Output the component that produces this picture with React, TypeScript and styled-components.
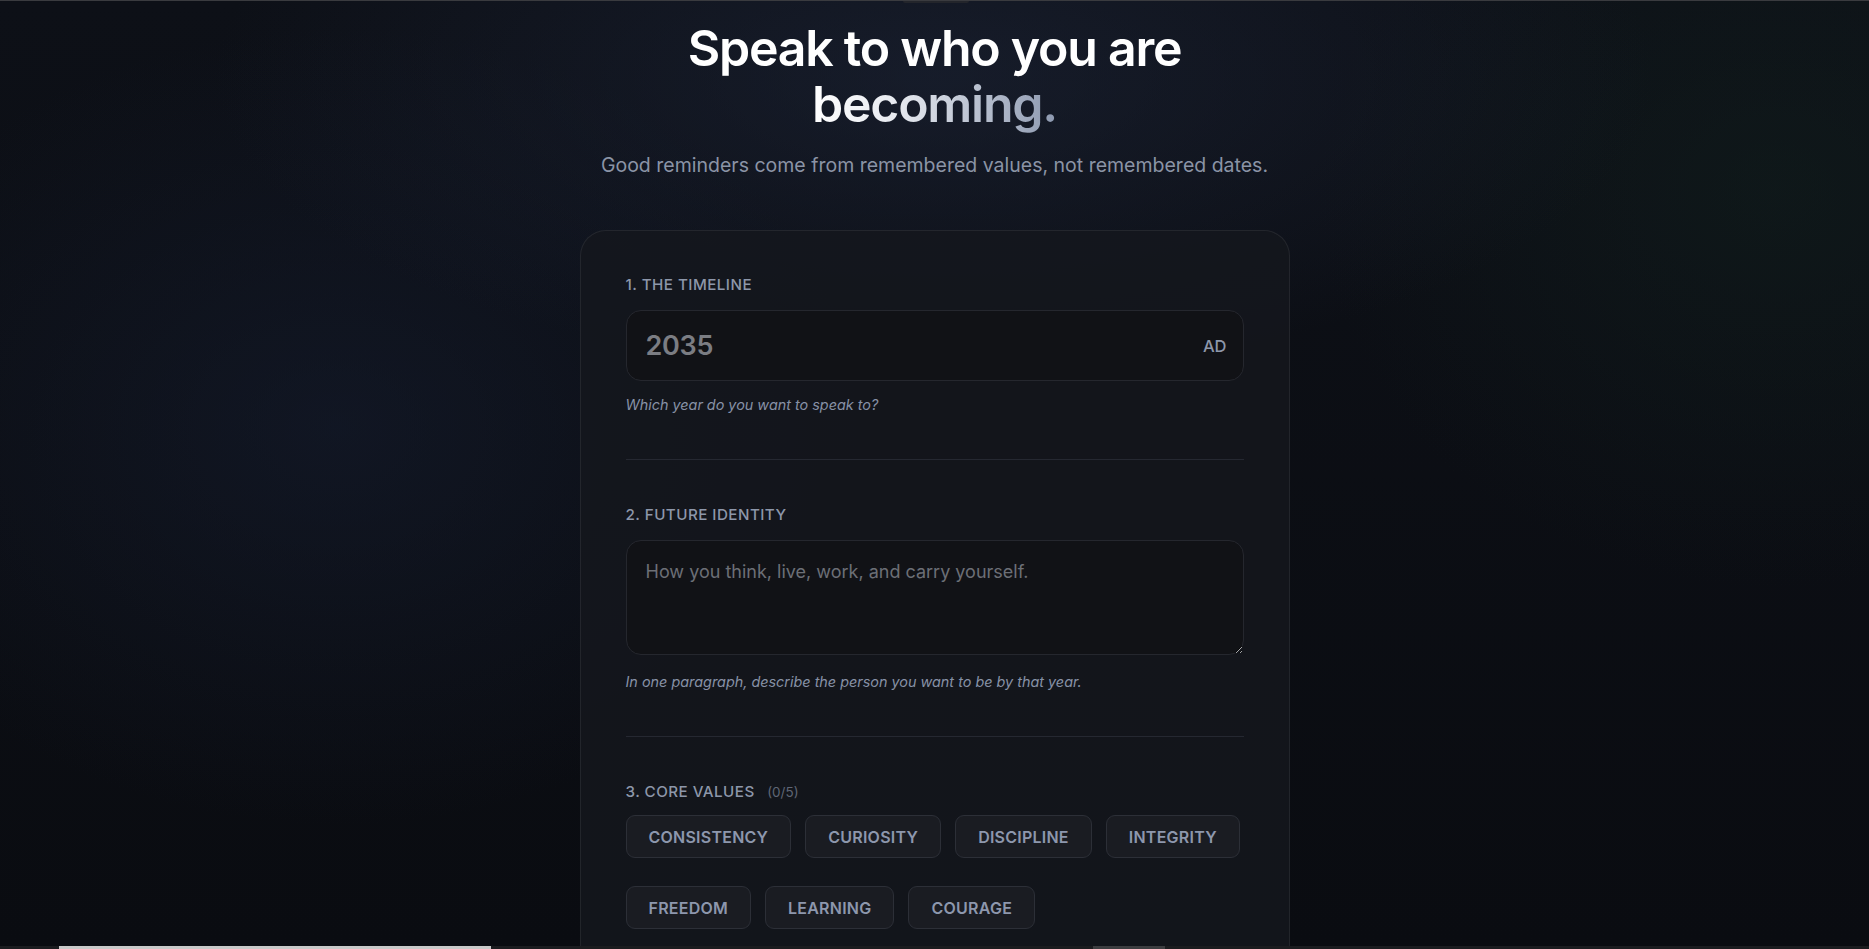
import styled, { createGlobalStyle } from "styled-components";

const GlobalStyle = createGlobalStyle`
  html, body {
    margin: 0;
    padding: 0;
    height: 100%;
  }
  body {
    background-color: #0a0c10;
    background-image:
      radial-gradient(ellipse 55% 45% at 50% 8%, rgba(30, 38, 58, 0.55), transparent 70%),
      radial-gradient(ellipse 40% 60% at 18% 45%, rgba(22, 30, 50, 0.5), transparent 70%),
      radial-gradient(ellipse 35% 60% at 95% 20%, rgba(18, 34, 30, 0.45), transparent 70%),
      linear-gradient(180deg, #0d1017 0%, #0a0c11 100%);
    background-attachment: fixed;
    color: #fff;
    font-family: Inter, "Noto Sans", sans-serif;
    overflow: hidden;
  }
`;

const values = [
  "Consistency",
  "Curiosity",
  "Discipline",
  "Integrity",
  "Freedom",
  "Learning",
  "Courage",
];

const App = () => {
  return (
    <>
      <GlobalStyle />
      <TopEdge>
        <TopTab />
      </TopEdge>
      <Page>
        <Title>
          Speak to who you are
          <br />
          <Fade>becoming.</Fade>
        </Title>
        <Subtitle>
          Good reminders come from remembered values, not remembered dates.
        </Subtitle>
        <Card>
          <Section>
            <Label>1. The Timeline</Label>
            <YearField>
              <YearInput defaultValue="2035" />
              <Suffix>AD</Suffix>
            </YearField>
            <Hint>Which year do you want to speak to?</Hint>
          </Section>
          <Section>
            <Label>2. Future Identity</Label>
            <Identity placeholder="How you think, live, work, and carry yourself." />
            <Hint>
              In one paragraph, describe the person you want to be by that
              year.
            </Hint>
          </Section>
          <Section $last>
            <Label $tight>
              3. Core Values <Count>(0/5)</Count>
            </Label>
            <Chips>
              {values.map((v) => (
                <Chip key={v} type="button">
                  {v}
                </Chip>
              ))}
            </Chips>
          </Section>
        </Card>
      </Page>
      <BottomTrack>
        <TrackThumb />
        <TrackMark />
      </BottomTrack>
    </>
  );
};

export default App;

const TopEdge = styled.div`
  position: fixed;
  top: 0;
  left: 0;
  right: 0;
  height: 1px;
  background: #3a3b3f;
  z-index: 5;
`;

const TopTab = styled.div`
  position: absolute;
  top: 1px;
  left: 903px;
  width: 66px;
  height: 2px;
  border-radius: 0 0 4px 4px;
  background: #23252b;
`;

const Page = styled.main`
  display: flex;
  flex-direction: column;
  align-items: center;
  padding-top: 20px;
`;

const Title = styled.h1`
  margin: 0;
  font-family: Inter, "Noto Sans", sans-serif;
  font-size: 50px;
  line-height: 56px;
  font-weight: 600;
  letter-spacing: -0.025em;
  text-align: center;
  color: #ffffff;
`;

const Fade = styled.span`
  background: linear-gradient(90deg, #ffffff 0%, #e6e9ef 35%, #8d99b0 100%);
  -webkit-background-clip: text;
  background-clip: text;
  color: transparent;
`;

const Subtitle = styled.p`
  margin: 19px 0 0;
  font-size: 19.5px;
  line-height: 28px;
  color: #8b94a6;
  text-align: center;
`;

const Card = styled.section`
  box-sizing: border-box;
  width: 710px;
  margin-top: 51px;
  padding: 44px 45px 0;
  border: 1px solid rgba(255, 255, 255, 0.07);
  border-radius: 26px;
  background: rgba(21, 23, 29, 0.82);
`;

const Section = styled.div<{ $last?: boolean }>`
  padding-bottom: ${(p) => (p.$last ? "40px" : "44px")};
  margin-bottom: ${(p) => (p.$last ? "0" : "45px")};
  border-bottom: ${(p) => (p.$last ? "none" : "1px solid #252831")};
`;

const Label = styled.div<{ $tight?: boolean }>`
  font-size: 15.2px;
  line-height: 20px;
  font-weight: 500;
  letter-spacing: 0.03em;
  text-transform: uppercase;
  color: #8d97aa;
  margin-bottom: ${(p) => (p.$tight ? "13px" : "15px")};
`;

const Count = styled.span`
  margin-left: 8px;
  font-size: 13.5px;
  font-weight: 400;
  letter-spacing: 0;
  color: #5f6675;
`;

const YearField = styled.div`
  display: flex;
  align-items: center;
  box-sizing: border-box;
  height: 71px;
  padding: 0 16px 0 19px;
  border: 1px solid #25272e;
  border-radius: 15px;
  background: #111216;
`;

const YearInput = styled.input`
  flex: 1;
  min-width: 0;
  border: none;
  outline: none;
  background: transparent;
  font-family: Inter, "Noto Sans", sans-serif;
  font-size: 27px;
  font-weight: 600;
  letter-spacing: -0.01em;
  color: #7b7d83;
  padding: 0;
`;

const Suffix = styled.span`
  font-size: 16.5px;
  font-weight: 500;
  color: #8d97aa;
`;

const Identity = styled.textarea`
  display: block;
  box-sizing: border-box;
  width: 100%;
  height: 115px;
  margin-bottom: 17px;
  padding: 19px 19px;
  border: 1px solid #25272e;
  border-radius: 15px;
  background: #111216;
  font-family: Inter, "Noto Sans", sans-serif;
  font-size: 18px;
  line-height: 24px;
  color: #d0d3d9;
  outline: none;
  resize: vertical;

  &::placeholder {
    color: #6c6f76;
  }
`;

const Hint = styled.p`
  margin: 14px 0 0;
  font-size: 14.4px;
  line-height: 20px;
  font-style: italic;
  color: #8791a6;
`;

const Chips = styled.div`
  display: flex;
  flex-wrap: wrap;
  gap: 28px 14px;
`;

const Chip = styled.button`
  box-sizing: border-box;
  height: 43px;
  padding: 0 22px;
  border: 1px solid #2c2f37;
  border-radius: 9px;
  background: #1a1c22;
  font-family: Inter, "Noto Sans", sans-serif;
  font-size: 16px;
  font-weight: 600;
  letter-spacing: 0.015em;
  text-transform: uppercase;
  color: #8d97ad;
  cursor: pointer;
`;

const BottomTrack = styled.div`
  position: fixed;
  left: 0;
  right: 0;
  bottom: 0;
  height: 3px;
  background: #1b1c1f;
  z-index: 5;
`;

const TrackThumb = styled.div`
  position: absolute;
  left: 59px;
  width: 432px;
  top: 0;
  bottom: 0;
  background: #c9c9c9;
`;

const TrackMark = styled.div`
  position: absolute;
  left: 1093px;
  width: 72px;
  top: 0;
  bottom: 0;
  background: #3c3d40;
`;
